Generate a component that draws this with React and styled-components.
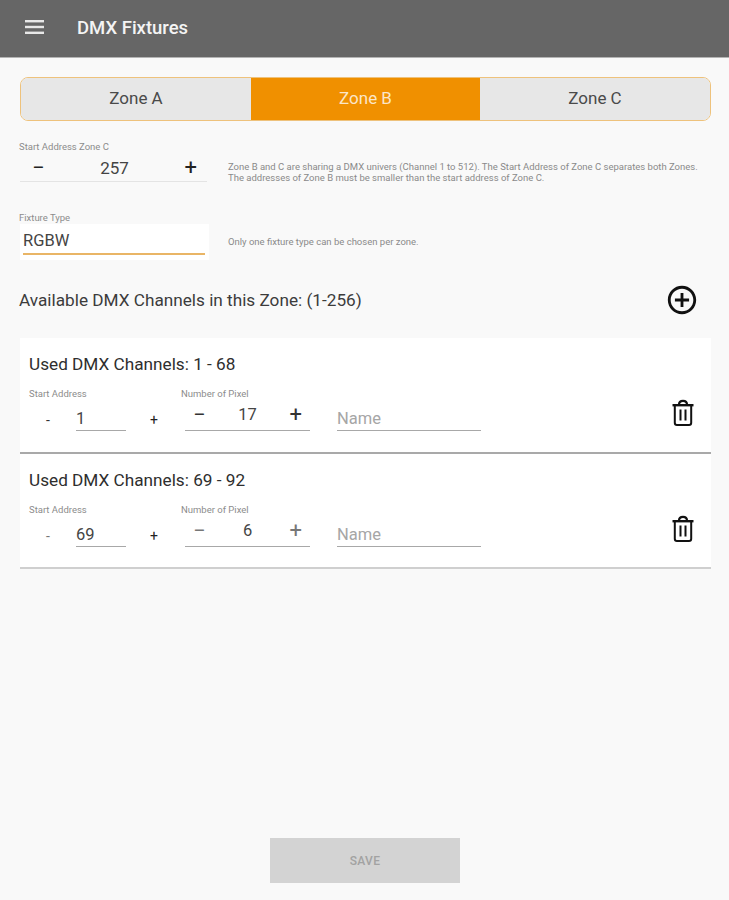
import React, { useState } from 'react';
import styled, { createGlobalStyle } from 'styled-components';

const GlobalStyle = createGlobalStyle`
  html, body {
    margin: 0;
    padding: 0;
    background: #f9f9f9;
    font-family: Roboto, "Liberation Sans", sans-serif;
  }
  * { box-sizing: border-box; }
`;

const Page = styled.div`
  display: flex;
  flex-direction: column;
  min-height: 900px;
  background: #f9f9f9;
`;

const TopBar = styled.header`
  display: flex;
  align-items: center;
  height: 58px;
  padding: 0 0 2px 24px;
  background: #666666;
  border-bottom: 1px solid #b4b4b4;
`;

const MenuIcon = styled.svg`
  width: 21px;
  height: 16px;
  margin-top: -2px;
  color: #e8e8e8;
`;

const Title = styled.h1`
  margin: 0 0 0 32px;
  font-size: 18.5px;
  font-weight: 500;
  color: #f4f4f4;
`;

const Content = styled.main`
  display: flex;
  flex-direction: column;
  padding: 19px 18px 0 20px;
`;

const ZoneTabs = styled.div`
  display: grid;
  grid-template-columns: 230px 229px 1fr;
  height: 44px;
  border: 1px solid #eec27c;
  border-radius: 8px;
  overflow: hidden;
`;

const ZoneTab = styled.button`
  border: 0;
  padding: 0 0 2px;
  font: 400 17px Roboto, "Liberation Sans", sans-serif;
  color: ${p => (p.$active ? '#fbe6c8' : '#4a4a4a')};
  background: ${p => (p.$active ? '#f09000' : '#e7e7e7')};
`;

const SettingRow = styled.section`
  display: flex;
  align-items: flex-start;
  margin-top: ${p => p.$top}px;
`;

const SettingField = styled.div`
  flex: 0 0 190px;
  margin-left: -1px;
`;

const TinyLabel = styled.div`
  font-size: 9.5px;
  line-height: 11px;
  color: #8c8c8c;
`;

const StepperBar = styled.div`
  display: flex;
  align-items: center;
  justify-content: space-between;
  height: 27px;
  margin: 3px 2px 0 1px;
  padding: 0 10px 0 12px;
  border-bottom: 1px solid #e4e4e4;
  font-size: 17px;
  color: #444444;
`;

const StepSign = styled.span`
  font-size: 22px;
  line-height: 22px;
  font-weight: 400;
  color: ${p => p.$color || '#222222'};
`;

const FixtureBox = styled.div`
  height: 36px;
  margin: 1px 0 0 1px;
  padding: 7px 4px 0 3px;
  background: #ffffff;
`;

const FixtureValue = styled.div`
  height: 24px;
  border-bottom: 2px solid #e9b566;
  font-size: 16.5px;
  line-height: 20px;
  color: #444444;
`;

const Hint = styled.p`
  margin: ${p => p.$top}px 0 0 19px;
  font-size: 9.5px;
  line-height: 11px;
  color: #8a8a8a;
  white-space: pre-line;
`;

const AvailableRow = styled.div`
  display: flex;
  align-items: center;
  justify-content: space-between;
  height: 40px;
  margin: 20px 0 18px -1px;
  padding-right: 12px;
`;

const AvailableText = styled.span`
  font-size: 17.2px;
  color: #3c3c3c;
`;

const AddIcon = styled.svg`
  width: 34px;
  height: 34px;
  color: #111111;
`;

const Card = styled.article`
  display: flex;
  flex-direction: column;
  position: relative;
  height: ${p => p.$height}px;
  padding: 15px 0 0 9px;
  background: #ffffff;
  border-bottom: 2px solid ${p => p.$line};
`;

const CardTitle = styled.h2`
  margin: 0;
  font-size: 17.2px;
  line-height: 22px;
  font-weight: 400;
  color: #2e2e2e;
`;

const FieldLine = styled.div`
  display: flex;
  align-items: flex-start;
  margin-top: 13px;
`;

const AddressCol = styled.div`
  flex: 0 0 156px;
`;

const PixelCol = styled.div`
  flex: 0 0 156px;
  margin-left: -4px;
`;

const AddressControl = styled.div`
  display: flex;
  align-items: flex-end;
  height: 32px;
  font-size: 16.5px;
  color: #444444;
`;

const SmallSign = styled.span`
  width: 47px;
  padding-left: ${p => p.$pad}px;
  padding-bottom: 1px;
  font-size: 14px;
  line-height: 20px;
  color: ${p => p.$color};
`;

const AddressValue = styled.span`
  width: 50px;
  height: 32px;
  padding-top: 10px;
  border-bottom: 1px solid #a8a8a8;
  line-height: 20px;
`;

const PixelControl = styled.div`
  display: flex;
  align-items: center;
  justify-content: space-between;
  width: 125px;
  height: 32px;
  margin-left: 4px;
  padding: 0 8px;
  border-bottom: 1px solid #a8a8a8;
  font-size: 16.5px;
  color: #444444;
`;

const NameInput = styled.input`
  width: 144px;
  height: 32px;
  margin-top: 11px;
  padding: 7px 0 0;
  border: 0;
  border-bottom: 1px solid #a8a8a8;
  border-radius: 0;
  outline: none;
  background: transparent;
  font: 400 16.5px Roboto, "Liberation Sans", sans-serif;
  color: #444444;
  &::placeholder { color: #a6a6a6; opacity: 1; }
`;

const TrashButton = styled.button`
  position: absolute;
  right: 16px;
  top: 61px;
  display: flex;
  padding: 0;
  border: 0;
  background: none;
  color: #111111;
`;

const SaveWrap = styled.div`
  display: flex;
  justify-content: center;
  margin-top: auto;
  padding: 0 0 17px 1px;
`;

const SaveButton = styled.button`
  width: 190px;
  height: 45px;
  border: 0;
  background: #d3d3d3;
  font: 500 12px Roboto, "Liberation Sans", sans-serif;
  letter-spacing: 0.3px;
  color: #a2a2a2;
`;

const TrashIcon = () => (
  <svg width="24" height="28" viewBox="0 0 24 28" fill="none" stroke="currentColor">
    <path d="M1.5 6.2h21" strokeWidth="2.400" />
    <path d="M8 5.500c0-3 1.700-3.700 4-3.700s4 .7 4 3.700" strokeWidth="2.200" />
    <path d="M3.800 6.500v17.200c0 1.400.8 2.200 2.200 2.200h12c1.400 0 2.200-.8 2.200-2.200V6.500" strokeWidth="2" />
    <path d="M9.500 10.500v11M14.500 10.500v11" strokeWidth="2" />
  </svg>
);

const channels = [
  { title: 'Used DMX Channels: 1 - 68', start: '1', pixels: '17', height: 116, line: '#a9a9a9', signs: '#333333' },
  { title: 'Used DMX Channels: 69 - 92', start: '69', pixels: '6', height: 115, line: '#cfcfcf', signs: '#777777' },
];

const App = () => {
  const [zone, setZone] = useState('Zone B');

  return (
    <Page>
      <GlobalStyle />
      <TopBar>
        <MenuIcon viewBox="0 0 21 16" fill="currentColor">
          <rect x="1" y="1" width="19" height="2.400" />
          <rect x="1" y="6.800" width="19" height="2.400" />
          <rect x="1" y="12.600" width="19" height="2.400" />
        </MenuIcon>
        <Title>DMX Fixtures</Title>
      </TopBar>

      <Content>
        <ZoneTabs>
          {['Zone A', 'Zone B', 'Zone C'].map(name => (
            <ZoneTab key={name} $active={zone === name} onClick={() => setZone(name)}>
              {name}
            </ZoneTab>
          ))}
        </ZoneTabs>

        <SettingRow $top={20}>
          <SettingField>
            <TinyLabel>Start Address Zone C</TinyLabel>
            <StepperBar>
              <StepSign>−</StepSign>
              <span>257</span>
              <StepSign>+</StepSign>
            </StepperBar>
          </SettingField>
          <Hint $top={20}>
            {'Zone B and C are sharing a DMX univers (Channel 1 to 512). The Start Address of Zone C separates both Zones.\nThe addresses of Zone B must be smaller than the start address of Zone C.'}
          </Hint>
        </SettingRow>

        <SettingRow $top={29}>
          <SettingField>
            <TinyLabel>Fixture Type</TinyLabel>
            <FixtureBox>
              <FixtureValue>RGBW</FixtureValue>
            </FixtureBox>
          </SettingField>
          <Hint $top={24}>Only one fixture type can be chosen per zone.</Hint>
        </SettingRow>

        <AvailableRow>
          <AvailableText>Available DMX Channels in this Zone: (1-256)</AvailableText>
          <AddIcon viewBox="0 0 24 24" fill="currentColor">
            <path d="M13 7h-2v4H7v2h4v4h2v-4h4v-2h-4V7zm-1-5C6.480 2 2 6.480 2 12s4.480 10 10 10 10-4.480 10-10S17.520 2 12 2zm0 18c-4.410 0-8-3.590-8-8s3.590-8 8-8 8 3.590 8 8-3.590 8-8 8z" />
          </AddIcon>
        </AvailableRow>

        {channels.map(item => (
          <Card key={item.title} $height={item.height} $line={item.line}>
            <CardTitle>{item.title}</CardTitle>
            <FieldLine>
              <AddressCol>
                <TinyLabel>Start Address</TinyLabel>
                <AddressControl>
                  <SmallSign $pad={17} $color={item.signs}>-</SmallSign>
                  <AddressValue>{item.start}</AddressValue>
                  <SmallSign $pad={24} $color="#222222">+</SmallSign>
                </AddressControl>
              </AddressCol>
              <PixelCol>
                <TinyLabel>Number of Pixel</TinyLabel>
                <PixelControl>
                  <StepSign $color={item.signs}>−</StepSign>
                  <span>{item.pixels}</span>
                  <StepSign $color={item.signs}>+</StepSign>
                </PixelControl>
              </PixelCol>
              <NameInput placeholder="Name" />
            </FieldLine>
            <TrashButton aria-label="Delete">
              <TrashIcon />
            </TrashButton>
          </Card>
        ))}
      </Content>

      <SaveWrap>
        <SaveButton disabled>SAVE</SaveButton>
      </SaveWrap>
    </Page>
  );
};

export default App;
